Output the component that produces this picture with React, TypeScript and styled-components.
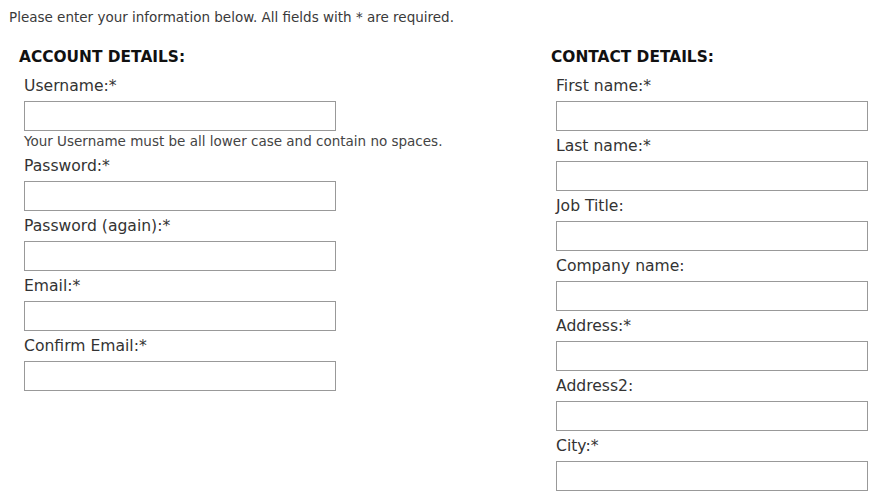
import styled, { createGlobalStyle } from 'styled-components';

const GlobalStyle = createGlobalStyle`
    body {
        margin: 0;
        background: #ffffff;
        font-family: "DejaVu Sans", "Liberation Sans", sans-serif;
        color: #333333;
    }
`;

const accountFields = [
    { label: 'Username:*', help: 'Your Username must be all lower case and contain no spaces.' },
    { label: 'Password:*', type: 'password' },
    { label: 'Password (again):*', type: 'password' },
    { label: 'Email:*', type: 'email' },
    { label: 'Confirm Email:*', type: 'email' },
];

const contactFields = [
    { label: 'First name:*' },
    { label: 'Last name:*' },
    { label: 'Job Title:' },
    { label: 'Company name:' },
    { label: 'Address:*' },
    { label: 'Address2:' },
    { label: 'City:*' },
];

type Field = { label: string; type?: string; help?: string };

const FieldList = ({ fields }: { fields: Field[] }) => (
    <Fields>
        {fields.map((f) => (
            <FieldRow key={f.label}>
                <Label>{f.label}</Label>
                <Input type={f.type || 'text'} />
                {f.help && <Help>{f.help}</Help>}
            </FieldRow>
        ))}
    </Fields>
);

const App = () => {
    return (
        <Page>
            <GlobalStyle />
            <Intro>Please enter your information below. All fields with * are required.</Intro>
            <Columns>
                <Column>
                    <Heading>ACCOUNT DETAILS:</Heading>
                    <FieldList fields={accountFields} />
                </Column>
                <Column>
                    <Heading>CONTACT DETAILS:</Heading>
                    <FieldList fields={contactFields} />
                </Column>
            </Columns>
        </Page>
    );
};

const Page = styled.div`
    padding: 8px 0 0 9px;
    width: 887px;
    height: 497px;
    box-sizing: border-box;
    overflow: hidden;
`;

const Intro = styled.p`
    margin: 0;
    font-size: 13.5px;
    line-height: 18px;
    color: #3a3a3a;
`;

const Columns = styled.div`
    display: grid;
    grid-template-columns: 532px 330px;
    padding: 22px 0 0 10px;
`;

const Column = styled.div`
    display: flex;
    flex-direction: column;
`;

const Heading = styled.h2`
    margin: 0 0 10px;
    font-size: 15.4px;
    line-height: 18px;
    font-weight: bold;
    color: #111111;
`;

const Fields = styled.div`
    display: flex;
    flex-direction: column;
    padding-left: 5px;
`;

const FieldRow = styled.div`
    display: flex;
    flex-direction: column;
    padding-bottom: 5px;
`;

const Label = styled.label`
    font-size: 15.6px;
    line-height: 20px;
    color: #333333;
    margin-bottom: 5px;
`;

const Input = styled.input`
    width: 312px;
    height: 30px;
    box-sizing: border-box;
    border: 1px solid #999999;
    margin: 0;
    padding: 2px 4px;
    background: #ffffff;
`;

const Help = styled.span`
    font-size: 13.5px;
    line-height: 20px;
    color: #444444;
`;

export default App;
